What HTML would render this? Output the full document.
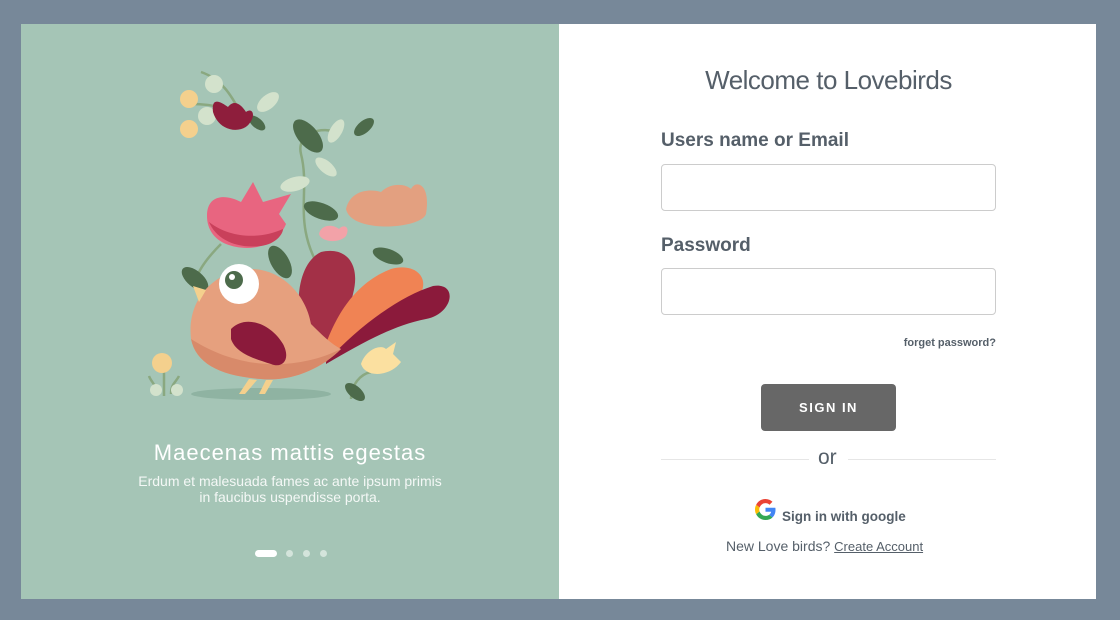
<!DOCTYPE html>
<html><head><meta charset="utf-8"><style>
body{margin:0;width:1120px;height:620px;background:#778899;font-family:"Liberation Sans",sans-serif;position:relative;overflow:hidden}
.card{position:absolute;left:21px;top:24px;width:1075px;height:575px;background:#fff}
.left{position:absolute;left:0;top:0;width:538px;height:575px;background:#a5c5b6}
.t{position:absolute;color:#fff;text-align:center;width:538px;left:0}
.r{position:absolute;color:#555f69}
.inp{position:absolute;left:640px;width:333px;height:45px;border:1px solid #ccc;border-radius:4px}
</style></head><body><div class="card">
<div class="left">
<svg width="538" height="400" style="position:absolute;left:0;top:0">
<g fill="none" stroke="#8aa880" stroke-width="2.5">
<path d="M302 250 C270 200 290 170 280 130 C275 110 300 100 320 110"/>
<path d="M175 255 C180 240 195 225 200 220"/>
<path d="M143 372 V335 M136 370 C135 360 130 358 128 352 M150 370 C150 360 155 358 158 352"/>
<path d="M180 48 C200 55 210 70 220 90 M170 80 C195 80 210 85 225 95"/>
<path d="M330 375 C330 360 340 350 350 348"/>
</g>
<g fill="#4d6b4b">
<ellipse cx="174" cy="255" rx="16" ry="8" transform="rotate(40 174 255)"/>
<ellipse cx="259" cy="238" rx="18" ry="9" transform="rotate(60 259 238)"/>
<ellipse cx="287" cy="112" rx="20" ry="10" transform="rotate(50 287 112)"/>
<ellipse cx="300" cy="187" rx="18" ry="8" transform="rotate(20 300 187)"/>
<ellipse cx="343" cy="103" rx="12" ry="6" transform="rotate(-40 343 103)"/>
<ellipse cx="367" cy="232" rx="16" ry="7" transform="rotate(20 367 232)"/>
<ellipse cx="334" cy="368" rx="12" ry="6" transform="rotate(40 334 368)"/>
<ellipse cx="236" cy="99" rx="10" ry="5" transform="rotate(40 236 99)"/>
</g>
<g fill="#d3e2cc">
<ellipse cx="247" cy="78" rx="13" ry="7" transform="rotate(-40 247 78)"/>
<ellipse cx="315" cy="107" rx="13" ry="6" transform="rotate(-60 315 107)"/>
<ellipse cx="274" cy="160" rx="15" ry="7" transform="rotate(-15 274 160)"/>
<ellipse cx="305" cy="143" rx="13" ry="6" transform="rotate(40 305 143)"/>
<circle cx="193" cy="60" r="9"/><circle cx="186" cy="92" r="9"/><circle cx="135" cy="366" r="6"/><circle cx="156" cy="366" r="6"/>
</g>
<g fill="#f4d08d"><circle cx="168" cy="75" r="9"/><circle cx="168" cy="105" r="9"/><circle cx="141" cy="339" r="10"/></g>
<path d="M192 88 C190 72 200 78 207 83 C213 75 220 80 225 88 C232 83 235 92 228 100 C220 110 198 108 192 88Z" fill="#8e1e3c"/>
<path d="M186 192 C186 170 205 170 220 178 L232 158 L242 178 L270 170 L258 190 L265 200 C255 225 225 228 205 220 C193 215 186 205 186 192Z" fill="#e86580"/>
<path d="M188 198 C195 215 215 225 240 222 C255 220 262 210 262 205 C240 215 210 215 188 198Z" fill="#c9405b"/>
<path d="M325 185 C330 165 350 165 360 168 C370 158 385 160 390 165 C395 155 410 160 405 190 C400 205 330 210 325 185Z" fill="#e3a080"/>
<path d="M298 210 C300 200 312 200 318 205 C322 200 330 202 325 212 C318 220 300 218 298 210Z" fill="#f2a2a8"/>
<path d="M290 330 C270 290 275 240 300 228 C325 222 340 240 332 270 C325 300 315 320 300 335Z" fill="#a33047"/>
<path d="M300 335 C310 300 330 260 370 245 C395 238 410 255 398 272 C380 295 340 320 305 338Z" fill="#f08354"/>
<path d="M305 338 C340 300 380 272 412 262 C438 258 432 290 405 295 C370 302 340 320 305 340Z" fill="#8b1a3b"/>
<ellipse cx="240" cy="370" rx="70" ry="6" fill="#8fb3a2"/>
<path d="M228 355 L218 370 L224 370 L236 356Z M245 356 L238 370 L244 370 L252 356Z" fill="#f4d08d"/>
<path d="M170 315 C165 270 200 245 230 245 C260 245 285 270 290 300 C300 310 310 320 320 325 C300 345 270 358 240 355 C200 352 175 340 170 315Z" fill="#e6a07e"/>
<path d="M170 315 C175 340 200 352 240 355 C270 358 300 345 320 325 C290 340 250 345 215 335 C195 330 178 320 170 315Z" fill="#d88a6a"/>
<path d="M210 305 C225 290 250 300 262 320 C270 335 262 345 250 340 C235 335 215 330 210 315Z" fill="#8b1a3b"/>
<path d="M172 262 L185 266 L178 278Z" fill="#f4d08d"/>
<circle cx="218" cy="260" r="20" fill="#fff"/><circle cx="213" cy="256" r="9" fill="#4d6b4b"/><circle cx="211" cy="253" r="3" fill="#fff"/>
<path d="M340 340 C345 325 360 320 365 325 L375 318 L372 330 L380 338 C370 352 345 355 340 340Z" fill="#fbe0a0"/>
</svg>
<div class="t" style="top:416px;font-size:22px;letter-spacing:1px">Maecenas mattis egestas</div>
<div class="t" style="top:449px;font-size:14px;line-height:16px;color:#f4f8f6">Erdum et malesuada fames ac ante ipsum primis<br>in faucibus uspendisse porta.</div>
<div style="position:absolute;left:234px;top:526px;width:22px;height:7px;border-radius:4px;background:#fff"></div>
<div style="position:absolute;left:265px;top:526px;width:7px;height:7px;border-radius:50%;background:#d4e4db"></div>
<div style="position:absolute;left:282px;top:526px;width:7px;height:7px;border-radius:50%;background:#d4e4db"></div>
<div style="position:absolute;left:299px;top:526px;width:7px;height:7px;border-radius:50%;background:#d4e4db"></div>
</div>
<div class="r" style="left:640px;width:335px;top:41px;text-align:center;font-size:26px;letter-spacing:-.5px">Welcome to Lovebirds</div>
<div class="r" style="left:640px;top:106px;font-size:19px;font-weight:bold">Users name or Email</div>
<div class="inp" style="top:140px"></div>
<div class="r" style="left:640px;top:211px;font-size:19px;font-weight:bold">Password</div>
<div class="inp" style="top:244px"></div>
<div class="r" style="left:640px;width:335px;text-align:right;top:313px;font-size:11px;font-weight:bold">forget password?</div>
<div style="position:absolute;left:740px;top:360px;width:135px;height:47px;background:#676767;border-radius:4px;color:#fff;font-size:13px;font-weight:bold;letter-spacing:1.5px;text-align:center;line-height:47px">SIGN IN</div>
<div style="position:absolute;left:640px;top:435px;width:148px;height:1px;background:#e6e6e6"></div>
<div style="position:absolute;left:827px;top:435px;width:148px;height:1px;background:#e6e6e6"></div>
<div class="r" style="left:797px;top:422px;font-size:21px">or</div>
<svg style="position:absolute;left:734px;top:475px" width="21" height="21" viewBox="0 0 48 48"><path fill="#EA4335" d="M24 9.5c3.5 0 6.6 1.2 9.1 3.6l6.8-6.8C35.8 2.4 30.3 0 24 0 14.6 0 6.6 5.4 2.7 13.3l7.9 6.2C12.5 13.6 17.8 9.5 24 9.5z"/><path fill="#4285F4" d="M46.9 24.5c0-1.6-.1-3.1-.4-4.5H24v9h12.9c-.6 3-2.300 5.5-4.8 7.2l7.7 6c4.5-4.2 7.1-10.3 7.1-17.700z"/><path fill="#FBBC05" d="M10.5 28.6c-.5-1.4-.8-3-.8-4.6s.3-3.2.8-4.6l-7.9-6.2C1 16.5 0 20.1 0 24s.9 7.5 2.6 10.8l7.9-6.2z"/><path fill="#34A853" d="M24 48c6.5 0 11.9-2.1 15.9-5.8l-7.7-6c-2.2 1.5-5 2.3-8.2 2.3-6.2 0-11.5-4.2-13.4-9.9l-7.9 6.2C6.6 42.6 14.6 48 24 48z"/></svg>
<div class="r" style="left:761px;top:485px;font-size:13.5px;font-weight:bold">Sign in with google</div>
<div class="r" style="left:705px;top:514px;font-size:14px">New Love birds? <span style="font-size:13px;text-decoration:underline">Create Account</span></div>
</div></body></html>
